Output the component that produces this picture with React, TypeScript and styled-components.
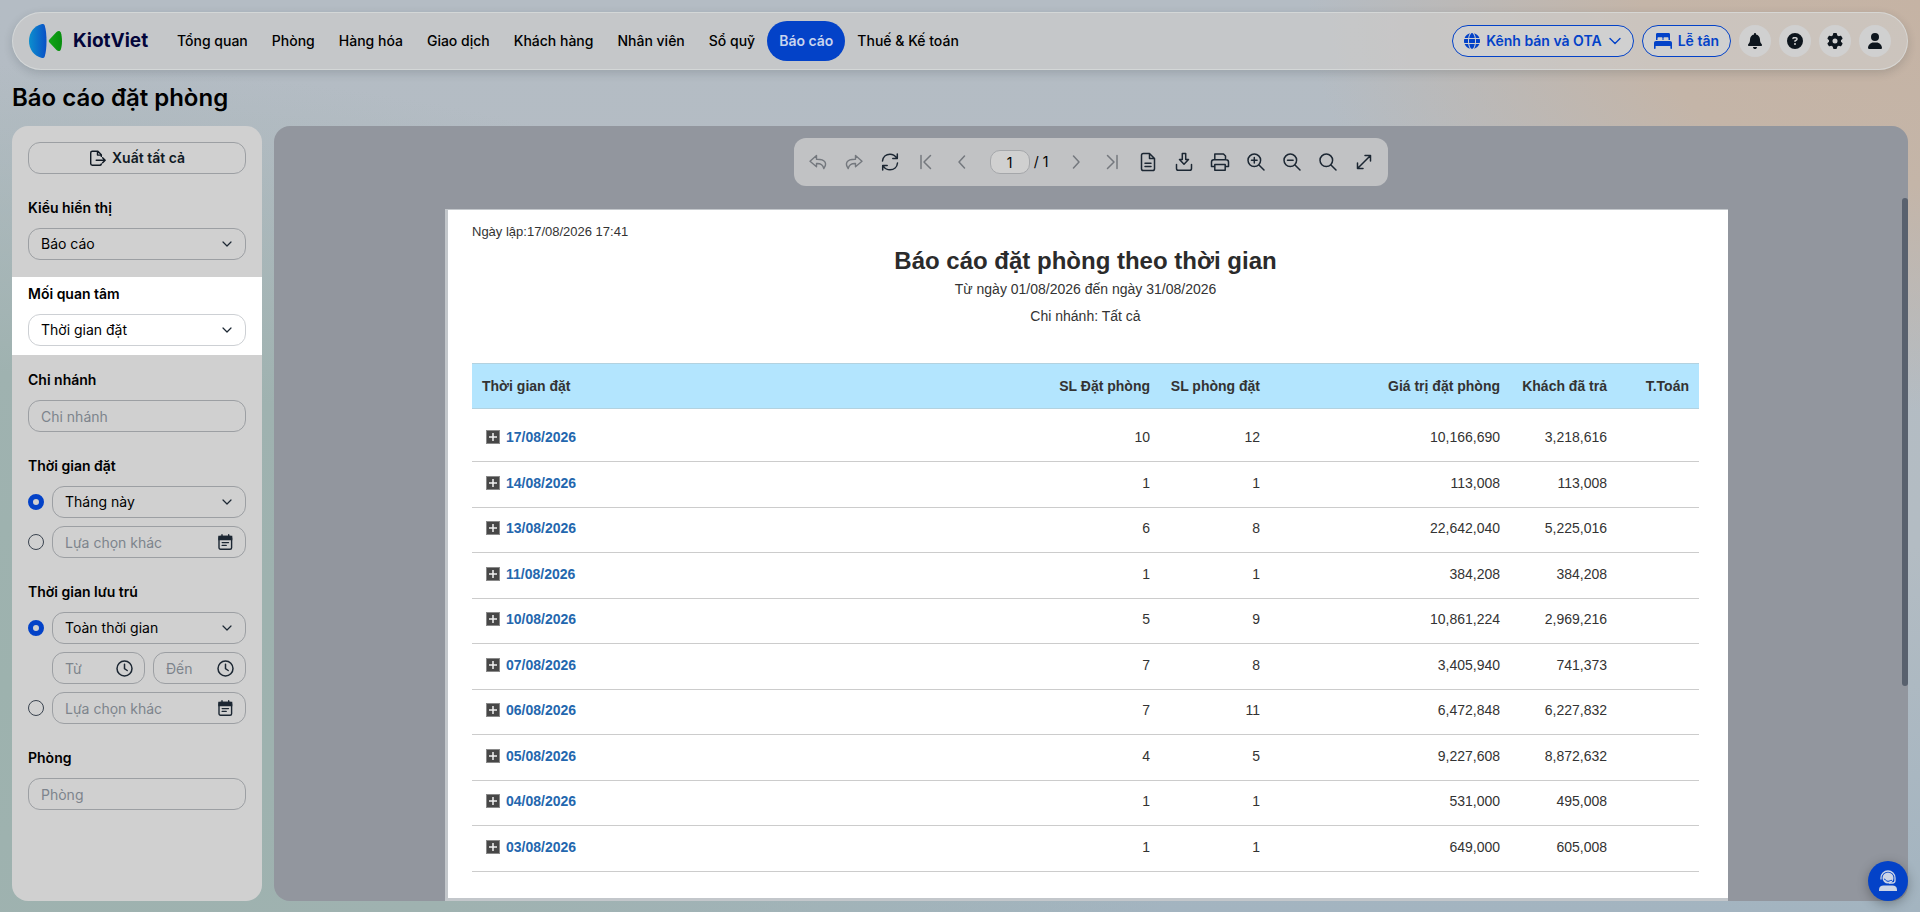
import React from "react";
import styled, { createGlobalStyle } from "styled-components";
import { FaBell, FaCircleQuestion, FaGear, FaGlobe, FaUser } from "react-icons/fa6";

const blue = "#0342c8";
const ink = "#1c2733";
const line = "#9c9fa3";

const GlobalStyle = createGlobalStyle`
  *, *::before, *::after { box-sizing: border-box; }
  body {
    margin: 0;
    color: #000000;
    font-family: Inter, "Noto Sans", sans-serif;
    font-size: 14px;
    line-height: 20px;
    background:
      radial-gradient(ellipse 32% 45% at 100% 0%, #c5b3a4 0%, #c4b5a8 45%, rgba(196, 181, 168, 0) 100%),
      radial-gradient(ellipse 65% 68% at 0% 75%, #9db2ae 0%, #9fb2b0 50%, rgba(159, 178, 176, 0) 100%),
      linear-gradient(180deg, #b4bcc4 0%, #b3bcc3 60%, #a3b4c0 100%);
    background-attachment: fixed;
  }
  button, input, select { font: inherit; color: inherit; margin: 0; }
  button { cursor: pointer; }
`;

const Shell = styled.div`
  display: flex;
  flex-direction: column;
  height: 100vh;
  padding: 12px 12px 11px;
`;

const Header = styled.header`
  display: flex;
  align-items: center;
  flex: none;
  height: 58px;
  padding: 0 16px;
  border: 1px solid rgba(220, 222, 222, 0.7);
  border-radius: 29px;
  background: rgba(208, 207, 205, 0.6);
  box-shadow: 0 3px 10px rgba(20, 30, 40, 0.16);
`;

const Logo = styled.a`
  display: flex;
  align-items: center;
  gap: 10px;
  width: 136px;
  color: #03053a;
  font-size: 19px;
  font-weight: 700;
  text-decoration: none;
  svg { flex: none; }
`;

const Nav = styled.nav`
  display: flex;
  flex: 1;
`;

const NavLink = styled.a<{ $active?: boolean }>`
  padding: 10px 12px;
  border-radius: 20px;
  font-weight: ${p => (p.$active ? 600 : 500)};
  text-decoration: none;
  white-space: nowrap;
  color: ${p => (p.$active ? "#c8d4ee" : "#000000")};
  background: ${p => (p.$active ? blue : "transparent")};
`;

const Actions = styled.div`
  display: flex;
  gap: 8px;
`;

const PillButton = styled.button`
  display: flex;
  align-items: center;
  gap: 6px;
  height: 32px;
  padding: 0 11px;
  border: 1px solid ${blue};
  border-radius: 16px;
  background: #d0d0d0;
  color: ${blue};
  font-weight: 600;
  white-space: nowrap;
`;

const RoundButton = styled.button`
  display: grid;
  place-items: center;
  width: 32px;
  height: 32px;
  padding: 0;
  border: 0;
  border-radius: 50%;
  background: #d0d0d0;
  color: #0d151d;
  font-size: 16px;
`;

const PageTitle = styled.h1`
  flex: none;
  margin: 12px 0;
  font-size: 24px;
  font-weight: 600;
  line-height: 32px;
`;

const Body = styled.div`
  display: flex;
  flex: 1;
  gap: 12px;
  min-height: 0;
`;

const Sidebar = styled.aside`
  display: flex;
  flex-direction: column;
  flex: none;
  gap: 8px;
  width: 250px;
  border-radius: 16px;
  background: #d0d0d0;
  overflow: hidden;
`;

const ExportRow = styled.div`
  padding: 16px 16px 9px;
`;

const ExportButton = styled.button`
  display: flex;
  align-items: center;
  justify-content: center;
  gap: 6px;
  width: 100%;
  height: 32px;
  border: 1px solid ${line};
  border-radius: 12px;
  background: transparent;
  color: #111a24;
  font-weight: 600;
`;

const FilterGroup = styled.fieldset<{ $focus?: boolean }>`
  display: flex;
  flex-direction: column;
  gap: 8px;
  min-width: 0;
  margin: 0;
  padding: 7px 16px 9px;
  border: 0;
  background: ${p => (p.$focus ? "#ffffff" : "transparent")};
  --line: ${p => (p.$focus ? "#cdd0d4" : line)};
`;

const FilterLabel = styled.label`
  margin-bottom: 2px;
  font-weight: 600;
`;

const OptionRow = styled.div`
  display: flex;
  align-items: center;
  gap: 8px;
`;

const TimeRow = styled(OptionRow)`
  padding-left: 24px;
`;

const Radio = styled.input`
  appearance: none;
  flex: none;
  width: 16px;
  height: 16px;
  border: 1px solid #3a434f;
  border-radius: 50%;
  &:checked { border: 5px solid ${blue}; }
`;

const Field = styled.div`
  display: grid;
  flex: 1;
  align-items: center;
  min-width: 0;
  > * { grid-area: 1 / 1; }
  > svg { justify-self: end; margin-right: 12px; pointer-events: none; color: ${ink}; }
`;

const Select = styled.select`
  appearance: none;
  width: 100%;
  height: 32px;
  padding: 0 32px 0 12px;
  border: 1px solid var(--line);
  border-radius: 12px;
  background: transparent;
`;

const TextInput = styled.input`
  width: 100%;
  height: 32px;
  padding: 0 12px;
  border: 1px solid var(--line);
  border-radius: 12px;
  background: transparent;
  &::placeholder { color: #7d848c; opacity: 1; }
`;

const Viewer = styled.main`
  position: relative;
  display: flex;
  flex-direction: column;
  align-items: center;
  flex: 1;
  gap: 23px;
  min-width: 0;
  padding-top: 12px;
  border-radius: 16px;
  background: #92969e;
  overflow: hidden;
`;

const ScrollThumb = styled.div`
  position: absolute;
  top: 72px;
  right: 0;
  width: 6px;
  height: 63%;
  border-radius: 3px;
  background: #59616e;
`;

const Toolbar = styled.div`
  display: flex;
  align-items: center;
  flex: none;
  height: 48px;
  padding: 0 6px;
  border-radius: 12px;
  background: #c1c2c4;
`;

const ToolButton = styled.button`
  display: grid;
  place-items: center;
  width: 36px;
  height: 36px;
  padding: 0;
  border: 0;
  background: transparent;
  color: ${ink};
  &:disabled { color: #74787e; }
`;

const Pager = styled.label`
  display: flex;
  align-items: center;
  justify-content: center;
  gap: 4px;
  width: 78px;
  white-space: nowrap;
`;

const PageInput = styled.input`
  width: 40px;
  height: 24px;
  padding: 0;
  border: 1px solid #a5a7aa;
  border-radius: 10px;
  background: #d0d0d0;
  text-align: center;
`;

const PaperArea = styled.div`
  display: flex;
  justify-content: center;
  flex: 1;
  width: 100%;
  min-height: 0;
  padding-right: 9px;
`;

const Paper = styled.article`
  width: 100%;
  max-width: 1283px;
  padding: 12px 29px 24px 24px;
  border: solid #c3c7cb;
  border-width: 1px 0 3px 3px;
  background: #ffffff;
  color: #333333;
  font-family: "Liberation Sans", Arial, sans-serif;
  overflow: hidden;
`;

const Created = styled.p`
  margin: 0;
  font-size: 13px;
`;

const ReportTitle = styled.h2`
  margin: 4px 0 0;
  color: #2b2b2b;
  font-size: 24px;
  line-height: 30px;
  text-align: center;
`;

const ReportMeta = styled.p`
  margin: 0;
  line-height: 27px;
  text-align: center;
`;

const ReportTable = styled.table`
  width: 100%;
  margin-top: 33px;
  table-layout: fixed;
  border-collapse: collapse;
  th, td { padding: 0 10px; text-align: right; white-space: nowrap; }
  th:first-child { text-align: left; }
  tbody th, td {
    height: 46px;
    padding-bottom: 16px;
    border-bottom: 1px solid #cccccc;
    line-height: 16px;
    vertical-align: bottom;
  }
  tbody tr:nth-child(odd) > * { height: 45px; }
  tbody tr:first-child > * { height: 53px; }
`;

const HeadRow = styled.tr`
  height: 45px;
  background: #b3e5fe;
  border-top: 1px solid #b3d2e0;
  border-bottom: 1px solid #b3d2e0;
`;

const Col = styled.col<{ $width?: number }>`
  width: ${p => (p.$width ? `${p.$width}px` : "auto")};
`;

const DateCell = styled.div`
  display: flex;
  align-items: center;
  gap: 6px;
  padding-left: 4px;
`;

const Expand = styled.button`
  display: grid;
  width: 14px;
  height: 14px;
  padding: 0;
  border: 1px solid #8a8a8a;
  background: #474747;
  color: #f2f2f2;
`;

const DateLink = styled.a`
  color: #2467ae;
  text-decoration: none;
`;

const Support = styled.button`
  position: fixed;
  right: 12px;
  bottom: 11px;
  display: grid;
  place-items: center;
  width: 40px;
  height: 40px;
  padding: 0;
  border: 0;
  border-radius: 50%;
  background: ${blue};
  color: #ccd5e6;
  box-shadow: 0 3px 12px rgba(0, 0, 0, 0.3);
`;

const Icon = ({ size = 20, width = 1.5, children }: { size?: number; width?: number; children: React.ReactNode }) => (
  <svg width={size} height={size} viewBox="0 0 20 20" fill="none" stroke="currentColor" strokeWidth={width} strokeLinecap="round" strokeLinejoin="round" aria-hidden="true">
    {children}
  </svg>
);

const Chevron = () => (
  <svg width="14" height="14" viewBox="0 0 14 14" fill="none" stroke="currentColor" strokeWidth="1.2" strokeLinecap="round" strokeLinejoin="round" aria-hidden="true">
    <path d="M3 5l4 4 4-4" />
  </svg>
);

const WideChevron = () => (
  <svg width="14" height="14" viewBox="0 0 14 14" fill="none" stroke="currentColor" strokeWidth="1.4" strokeLinecap="round" strokeLinejoin="round" aria-hidden="true">
    <path d="M2 4.500l5 5 5-5" />
  </svg>
);

const LogoMark = () => (
  <svg width="34" height="34" viewBox="0 0 34 34" aria-hidden="true">
    <defs>
      <linearGradient id="logoBlue" x1="0" x2="1"><stop offset="0" stopColor="#0c8fce" /><stop offset="1" stopColor="#0a50c6" /></linearGradient>
      <linearGradient id="logoGreen" x1="0" x2="1"><stop offset="0" stopColor="#12a416" /><stop offset="1" stopColor="#078d0e" /></linearGradient>
    </defs>
    <path d="M13 0C5 2 0 8.500 0 17s5 15 13 17c1.500.3 2.300-.4 2.800-1.800C17 28 17.500 23 17.500 17S17 6 15.800 1.800C15.300.4 14.500-.3 13 0z" fill="url(#logoBlue)" />
    <path d="M20.500 15.500l7-7.500c1.700-1.600 3.500-1.500 4.300.5 1.600 4.500 1.600 12.500 0 17-.8 2-2.600 2.100-4.300.5l-7-7.500c-1-1.100-1-1.900 0-3z" fill="url(#logoGreen)" />
  </svg>
);

const BedIcon = () => (
  <svg width="18" height="16" viewBox="0 0 18 16" fill="currentColor" aria-hidden="true">
    <path d="M3.500 0h11C15.600 0 16 .7 16 1.500V7h-1.500V5.300c0-.6-.4-1-1-1h-3c-.6 0-1 .4-1 1V7h-1V5.300c0-.6-.4-1-1-1h-3c-.6 0-1 .4-1 1V7H2V1.500C2 .7 2.400 0 3.500 0zM2 8h14c1.200 0 2 .8 2 2v5.200c0 .5-.3.8-.8.8s-.8-.3-.8-.8V13H1.600v2.200c0 .5-.3.8-.8.8s-.8-.3-.8-.8V10c0-1.200.8-2 2-2z" />
  </svg>
);

const ExportIcon = () => (
  <Icon size={17} width={1.7}>
    <path d="M14.500 7.500V5.500l-4-4H4C2.800 1.500 2 2.300 2 3.500v12.500c0 1.200.8 2 2 2h8.500c1 0 1.800-.6 2-1.500M10 2v4h4.500M8.500 12h10M16 9l3 3-3 3" />
  </Icon>
);

const CalendarIcon = () => (
  <svg width="16" height="16" viewBox="0 0 16 16" fill="none" stroke="currentColor" strokeWidth="1.400" strokeLinecap="round" aria-hidden="true">
    <rect x="1" y="2.500" width="12.600" height="12.700" rx="1.500" />
    <path d="M1 2.500h12.600v3H1z" fill="currentColor" />
    <path d="M4 .8v2M10.700 .8v2M4.200 8.600h6.300M4.200 11.400h4" />
  </svg>
);

const ClockIcon = () => (
  <svg width="17" height="17" viewBox="0 0 17 17" fill="none" stroke="currentColor" strokeWidth="1.500" strokeLinecap="round" strokeLinejoin="round" aria-hidden="true">
    <circle cx="8.500" cy="8.500" r="7.500" />
    <path d="M8.500 4.200v4.500l2.700 1.800" />
  </svg>
);

const UndoIcon = () => (
  <Icon width={1.4}><path d="M8.500 3.500L2 9.300l6.500 5.500v-3.300c4.500-.2 6.500 1.200 7.300 5 3.600-5 1.700-9.500-7.300-9.300z" /></Icon>
);
const RedoIcon = () => (
  <Icon width={1.4}><path d="M11.500 3.500L18 9.300l-6.500 5.500v-3.300c-4.500-.2-6.500 1.200-7.300 5-3.600-5-1.700-9.500 7.300-9.300z" /></Icon>
);
const RefreshIcon = () => (
  <Icon><path d="M2.500 9C2.900 5 6 2.200 10 2.200c2.800 0 5 1.300 6.500 3.500M17.300 2v4.500h-4.500M17.500 11c-.4 4-3.500 6.800-7.500 6.800-2.800 0-5-1.300-6.500-3.500M2.700 18v-4.500h4.500" /></Icon>
);
const FirstIcon = () => <Icon><path d="M5 3.500v13M14.500 3.500L8 10l6.500 6.500" /></Icon>;
const PrevIcon = () => <Icon><path d="M12.500 4L7 10l5.500 6" /></Icon>;
const NextIcon = () => <Icon><path d="M7.500 4l5.500 6-5.500 6" /></Icon>;
const LastIcon = () => <Icon><path d="M15 3.500v13M5.500 3.500L12 10l-6.500 6.500" /></Icon>;
const DocIcon = () => (
  <Icon><path d="M11.500 1.500H5.300c-1 0-1.800.8-1.800 1.800v13.400c0 1 .8 1.800 1.800 1.800h9.400c1 0 1.800-.8 1.800-1.800V6.500zM11.500 1.500v5h5M7 11.200h6M7 14.500h6" /></Icon>
);
const DownloadIcon = () => (
  <Icon><path d="M8.300 1.500h3.400v6h2.800L10 12.300 5.500 7.500h2.800zM2.500 12.500v4c0 1 .8 1.800 1.800 1.800h11.400c1 0 1.800-.8 1.800-1.800v-4" /></Icon>
);
const PrintIcon = () => (
  <Icon><path d="M4.800 7V2h8.700l2 2v3M4.500 14.500h-3V10c0-1.400 1-2.300 2.300-2.300h12.400c1.300 0 2.300.9 2.300 2.300v4.500h-3M4.800 12.500h10.400v5.700H4.800z" /></Icon>
);
const Lens = ({ children }: { children?: React.ReactNode }) => (
  <Icon><circle cx="8.300" cy="8.300" r="6.300" /><path d="M13 13l5 5" />{children}</Icon>
);
const ExpandIcon = () => <Icon><path d="M4 16L16 4M11 3.500h5.500V9M9 16.500H3.500V11" /></Icon>;
const SupportIcon = () => (
  <svg width="20" height="22" viewBox="0 0 20 22" aria-hidden="true">
    <circle cx="10" cy="8" r="5.500" fill="currentColor" />
    <path d="M3 9.500V8a7 7 0 0 1 14 0v2.500c0 1.500-1 2.500-2.500 2.500H11" fill="none" stroke="currentColor" strokeWidth="1.300" />
    <path d="M6 9c1.500 0 2 2.300 4 2.300 1.500 0 2-1 4-1" fill="none" stroke={blue} strokeWidth="1" />
    <path d="M1 21v-1.500C1 17 3 15.500 5.500 15.500h9c2.500 0 4.500 1.500 4.500 4V21z" fill="currentColor" />
  </svg>
);

const navItems = ["Tổng quan", "Phòng", "Hàng hóa", "Giao dịch", "Khách hàng", "Nhân viên", "Sổ quỹ", "Báo cáo", "Thuế & Kế toán"];

const rows = [
  ["17/08/2026", "10", "12", "10,166,690", "3,218,616"],
  ["14/08/2026", "1", "1", "113,008", "113,008"],
  ["13/08/2026", "6", "8", "22,642,040", "5,225,016"],
  ["11/08/2026", "1", "1", "384,208", "384,208"],
  ["10/08/2026", "5", "9", "10,861,224", "2,969,216"],
  ["07/08/2026", "7", "8", "3,405,940", "741,373"],
  ["06/08/2026", "7", "11", "6,472,848", "6,227,832"],
  ["05/08/2026", "4", "5", "9,227,608", "8,872,632"],
  ["04/08/2026", "1", "1", "531,000", "495,008"],
  ["03/08/2026", "1", "1", "649,000", "605,008"],
];

const Dropdown = ({ id, value, label }: { id: string; value: string; label?: string }) => (
  <Field>
    <Select id={id} aria-label={label}><option>{value}</option></Select>
    <Chevron />
  </Field>
);

const IconInput = ({ hint, icon }: { hint: string; icon: React.ReactNode }) => (
  <Field>
    <TextInput placeholder={hint} aria-label={hint} />
    {icon}
  </Field>
);

export default function App() {
  return (
    <>
      <GlobalStyle />
      <Shell>
        <Header>
          <Logo href="#"><LogoMark />KiotViet</Logo>
          <Nav>
            {navItems.map(item => <NavLink key={item} href="#" $active={item === "Báo cáo"}>{item}</NavLink>)}
          </Nav>
          <Actions>
            <PillButton><FaGlobe size={16} />Kênh bán và OTA<WideChevron /></PillButton>
            <PillButton><BedIcon />Lễ tân</PillButton>
            <RoundButton aria-label="Thông báo"><FaBell /></RoundButton>
            <RoundButton aria-label="Trợ giúp"><FaCircleQuestion /></RoundButton>
            <RoundButton aria-label="Thiết lập"><FaGear /></RoundButton>
            <RoundButton aria-label="Tài khoản"><FaUser /></RoundButton>
          </Actions>
        </Header>
        <PageTitle>Báo cáo đặt phòng</PageTitle>
        <Body>
          <Sidebar>
            <ExportRow><ExportButton><ExportIcon />Xuất tất cả</ExportButton></ExportRow>
            <FilterGroup>
              <FilterLabel htmlFor="view">Kiểu hiển thị</FilterLabel>
              <Dropdown id="view" value="Báo cáo" />
            </FilterGroup>
            <FilterGroup $focus>
              <FilterLabel htmlFor="concern">Mối quan tâm</FilterLabel>
              <Dropdown id="concern" value="Thời gian đặt" />
            </FilterGroup>
            <FilterGroup>
              <FilterLabel htmlFor="branch">Chi nhánh</FilterLabel>
              <TextInput id="branch" placeholder="Chi nhánh" />
            </FilterGroup>
            <FilterGroup>
              <FilterLabel htmlFor="booked">Thời gian đặt</FilterLabel>
              <OptionRow>
                <Radio type="radio" name="booked" defaultChecked aria-label="Tháng này" />
                <Dropdown id="booked" value="Tháng này" />
              </OptionRow>
              <OptionRow>
                <Radio type="radio" name="booked" aria-label="Lựa chọn khác" />
                <IconInput hint="Lựa chọn khác" icon={<CalendarIcon />} />
              </OptionRow>
            </FilterGroup>
            <FilterGroup>
              <FilterLabel htmlFor="stay">Thời gian lưu trú</FilterLabel>
              <OptionRow>
                <Radio type="radio" name="stay" defaultChecked aria-label="Toàn thời gian" />
                <Dropdown id="stay" value="Toàn thời gian" />
              </OptionRow>
              <TimeRow>
                <IconInput hint="Từ" icon={<ClockIcon />} />
                <IconInput hint="Đến" icon={<ClockIcon />} />
              </TimeRow>
              <OptionRow>
                <Radio type="radio" name="stay" aria-label="Lựa chọn khác" />
                <IconInput hint="Lựa chọn khác" icon={<CalendarIcon />} />
              </OptionRow>
            </FilterGroup>
            <FilterGroup>
              <FilterLabel htmlFor="room">Phòng</FilterLabel>
              <TextInput id="room" placeholder="Phòng" />
            </FilterGroup>
          </Sidebar>
          <Viewer>
            <Toolbar role="toolbar">
              <ToolButton disabled aria-label="Hoàn tác"><UndoIcon /></ToolButton>
              <ToolButton disabled aria-label="Làm lại"><RedoIcon /></ToolButton>
              <ToolButton aria-label="Tải lại"><RefreshIcon /></ToolButton>
              <ToolButton disabled aria-label="Trang đầu"><FirstIcon /></ToolButton>
              <ToolButton disabled aria-label="Trang trước"><PrevIcon /></ToolButton>
              <Pager><PageInput defaultValue="1" />/ 1</Pager>
              <ToolButton disabled aria-label="Trang sau"><NextIcon /></ToolButton>
              <ToolButton disabled aria-label="Trang cuối"><LastIcon /></ToolButton>
              <ToolButton aria-label="Xem trang in"><DocIcon /></ToolButton>
              <ToolButton aria-label="Tải xuống"><DownloadIcon /></ToolButton>
              <ToolButton aria-label="In"><PrintIcon /></ToolButton>
              <ToolButton aria-label="Phóng to"><Lens><path d="M5.500 8.300h5.600M8.300 5.500v5.600" /></Lens></ToolButton>
              <ToolButton aria-label="Thu nhỏ"><Lens><path d="M5.500 8.300h5.600" /></Lens></ToolButton>
              <ToolButton aria-label="Tìm kiếm"><Lens /></ToolButton>
              <ToolButton aria-label="Toàn màn hình"><ExpandIcon /></ToolButton>
            </Toolbar>
            <PaperArea>
              <Paper>
                <Created>Ngày lập:17/08/2026 17:41</Created>
                <ReportTitle>Báo cáo đặt phòng theo thời gian</ReportTitle>
                <ReportMeta>Từ ngày 01/08/2026 đến ngày 31/08/2026</ReportMeta>
                <ReportMeta>Chi nhánh: Tất cả</ReportMeta>
                <ReportTable>
                  <colgroup>
                    <Col /><Col $width={120} /><Col $width={110} /><Col $width={240} /><Col $width={107} /><Col $width={82} />
                  </colgroup>
                  <thead>
                    <HeadRow>
                      <th>Thời gian đặt</th><th>SL Đặt phòng</th><th>SL phòng đặt</th><th>Giá trị đặt phòng</th><th>Khách đã trả</th><th>T.Toán</th>
                    </HeadRow>
                  </thead>
                  <tbody>
                    {rows.map(([date, ...cells]) => (
                      <tr key={date}>
                        <th scope="row">
                          <DateCell>
                            <Expand aria-label={`Mở rộng ${date}`}>
                              <svg width="12" height="12" viewBox="0 0 12 12" stroke="currentColor" strokeWidth="1.500"><path d="M2 6h8M6 2v8" /></svg>
                            </Expand>
                            <DateLink href="#">{date}</DateLink>
                          </DateCell>
                        </th>
                        {cells.map((c, i) => <td key={i}>{c}</td>)}
                        <td />
                      </tr>
                    ))}
                  </tbody>
                </ReportTable>
              </Paper>
            </PaperArea>
            <ScrollThumb />
          </Viewer>
        </Body>
      </Shell>
      <Support aria-label="Hỗ trợ"><SupportIcon /></Support>
    </>
  );
}
